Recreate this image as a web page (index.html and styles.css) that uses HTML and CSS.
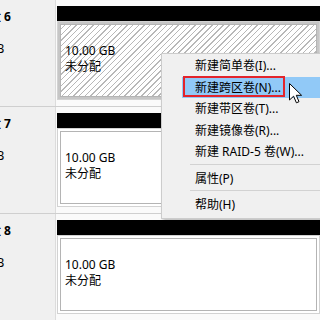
FILE: index.html
```html
<!DOCTYPE html>
<html lang="zh-CN">
<head>
    <meta charset="UTF-8">
    <title>磁盘管理</title>
    <link rel="stylesheet" href="styles.css">
</head>
<body>
<div class="pane">
    <div class="disk">
        <div class="label">
            <div class="name"><span class="icon"></span>磁盘 6</div>
            <div>基本</div>
            <div>10.00 GB</div>
            <div>联机</div>
        </div>
        <div class="vol">
            <div class="bar"></div>
            <div class="part selected">
                <div class="inner hatch">10.00 GB<br>未分配</div>
            </div>
        </div>
    </div>
    <div class="disk">
        <div class="label">
            <div class="name"><span class="icon"></span>磁盘 7</div>
            <div>基本</div>
            <div>10.00 GB</div>
            <div>联机</div>
        </div>
        <div class="vol">
            <div class="bar"></div>
            <div class="part">
                <div class="inner">10.00 GB<br>未分配</div>
            </div>
        </div>
    </div>
    <div class="disk">
        <div class="label">
            <div class="name"><span class="icon"></span>磁盘 8</div>
            <div>基本</div>
            <div>10.00 GB</div>
            <div>联机</div>
        </div>
        <div class="vol">
            <div class="bar"></div>
            <div class="part">
                <div class="inner">10.00 GB<br>未分配</div>
            </div>
        </div>
    </div>
</div>

<!-- 右键菜单 -->
<div class="menu">
    <div class="item">新建简单卷(I)...</div>
    <div class="item hover">新建跨区卷(N)...</div>
    <div class="item">新建带区卷(T)...</div>
    <div class="item">新建镜像卷(R)...</div>
    <div class="item">新建 RAID-5 卷(W)...</div>
    <div class="sep"></div>
    <div class="item">属性(P)</div>
    <div class="sep"></div>
    <div class="item">帮助(H)</div>
</div>
<div class="mark"></div>

<svg class="cursor" width="14" height="21" viewBox="0 0 14 21">
    <path d="M0.5 0.5 L0.5 17 L4.6 13.2 L7.4 19.8 L10 18.7 L7.3 12.3 L12.6 12.3 Z" fill="#fff" stroke="#000" stroke-width="1"/>
</svg>
</body>
</html>
```

FILE: styles.css
```css
body {
    margin: 0;
    width: 320px;
    height: 320px;
    overflow: hidden;
    background: #fff;
    font-family: "Noto Sans", "Noto Sans CJK SC", sans-serif;
    font-size: 12px;
    color: #000;
}

.disk {
    display: flex;
    height: 106px;
    border-bottom: 1px solid #cfcfcf;
}

.label {
    width: 55px;
    flex: none;
    background: #f0f0f0;
    border-right: 1px solid #dcdcdc;
    overflow: hidden;
    padding-top: 9px;
    line-height: 16px;
    white-space: nowrap;
}

.label div {
    margin-left: -46px;
}

.label .name {
    font-weight: bold;
}

.label .icon {
    display: inline-block;
    width: 16px;
    height: 12px;
    margin-right: 7px;
    background: #9a9a9a;
}

.vol {
    flex: 1;
    padding-top: 6px;
    padding-left: 1px;
    background: #fafafa;
}

.bar {
    height: 15px;
    background: #000;
}

.part {
    height: 79px;
    box-sizing: border-box;
    border: 1px solid #d2d2d2;
    padding: 2px;
    background: #fff;
}

.part.selected {
    background: #c6c6c6;
}

.inner {
    height: 100%;
    box-sizing: border-box;
    border: 1px solid #b4b4b4;
    padding: 18px 0 0 4px;
    line-height: 16px;
    background: #fff;
    white-space: nowrap;
}

.hatch {
    background: repeating-linear-gradient(-45deg, #fff 0, #fff 3px, #b8b8b8 3px, #b8b8b8 4px);
}

.menu {
    position: absolute;
    left: 161px;
    top: 53px;
    width: 180px;
    padding: 1px 0 2px;
    background: #f0f0f0;
    border: 1px solid #cccccc;
    box-shadow: 2px 2px 3px rgba(0, 0, 0, 0.25);
}

.item {
    height: 21.5px;
    line-height: 21.5px;
    margin-left: 20px;
    padding-left: 13px;
    white-space: nowrap;
}

.item.hover {
    background: #91c9f7;
}

.sep {
    margin: 1px 0 3px 28px;
    border-top: 1px solid #d2d2d2;
}

.mark {
    position: absolute;
    left: 183px;
    top: 76px;
    width: 98px;
    height: 17px;
    border: 2px solid #e3242b;
}

.cursor {
    position: absolute;
    left: 289px;
    top: 83px;
}
```
